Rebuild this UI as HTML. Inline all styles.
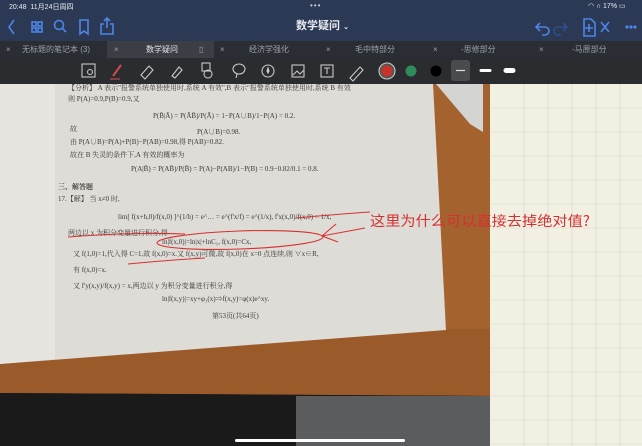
<!DOCTYPE html><html><head><meta charset="utf-8"><style>
*{margin:0;padding:0;box-sizing:border-box}
body{width:642px;height:446px;overflow:hidden;background:#2b3448;font-family:"Liberation Sans","Noto Sans CJK SC",sans-serif;position:relative}
.abs{position:absolute}
.top{left:0;top:0;width:642px;height:41px;background:#2c3954}
.tabs{left:0;top:41px;width:642px;height:17px;background:#2a2d33;color:#9aa0aa;font-size:8px}
.tool{left:0;top:58px;width:642px;height:26px;background:#2b2c2f}
.tab{position:absolute;top:0;height:17px;line-height:17px}
</style></head><body>
<div class="abs top">
<div class="abs" style="left:9px;top:2px;color:#e8ecf2;font-size:7px">20:48 &nbsp;11月24日周四</div>
<div class="abs" style="left:310px;top:1px;color:#c8cdd6;font-size:8px;letter-spacing:1px">•••</div>
<div class="abs" style="left:588px;top:2px;color:#e8ecf2;font-size:7px">◠ ∩ 17% ▭</div>
<svg class="abs" style="left:0;top:14px" width="642" height="27" fill="none" stroke="#4d86e8" stroke-width="1.6">
<path d="M14 6 L9 13 L14 20"/>
<rect x="32" y="8" width="4" height="4"/><rect x="38" y="8" width="4" height="4"/><rect x="32" y="14" width="4" height="4"/><rect x="38" y="14" width="4" height="4"/>
<circle cx="59" cy="11" r="4.5"/><path d="M62 14 L66 18"/>
<path d="M80 6 h8 v14 l-4 -3 l-4 3 z"/>
<path d="M104 10 h-3 v10 h12 v-10 h-3 M107 4 v10 M104 7 l3 -3 l3 3"/>
<path d="M540 9 l-4 4 l4 4 M536 13 h9 a4 4 0 0 1 0 8 h-3" />
<path d="M563 9 l4 4 l-4 4 M567 13 h-9 a4 4 0 0 0 0 8 h3" stroke="#2f4f8a"/>
<path d="M584 5 h7 l4 4 v13 h-11 z M589 10 v8 M585 14 h8"/>
<path d="M601 8 l8 10 M609 8 l-8 10"/>
<circle cx="627" cy="13" r="0.8"/><circle cx="631" cy="13" r="0.8"/><circle cx="635" cy="13" r="0.8"/>
</svg>
<div class="abs" style="left:296px;top:17px;color:#e8ecf2;font-size:11px;font-weight:bold">数学疑问 <span style="font-size:7px">⌄</span></div>
</div>
<div class="abs tabs">
<div class="tab" style="left:107px;width:107px;background:#3b3e45"></div>
<div class="tab" style="left:6px">×</div><div class="tab" style="left:22px">无标题的笔记本 (3)</div>
<div class="tab" style="left:114px">×</div><div class="tab" style="left:146px;color:#e6e8ec">数学疑问</div><div class="tab" style="left:199px">▯</div>
<div class="tab" style="left:220px">×</div><div class="tab" style="left:249px">经济学强化</div>
<div class="tab" style="left:326px">×</div><div class="tab" style="left:355px">毛中特部分</div>
<div class="tab" style="left:433px">×</div><div class="tab" style="left:461px">-思修部分</div>
<div class="tab" style="left:539px">×</div><div class="tab" style="left:572px">-马原部分</div>
</div>
<div class="abs tool">
<svg width="642" height="26" fill="none" stroke="#c9c9c9" stroke-width="1.1">
<rect x="82" y="6" width="13" height="13"/><circle cx="90" cy="14" r="2.5"/>
<path d="M113 18 l8 -11" stroke="#d24a4a" stroke-width="2"/><path d="M110 21 h10" stroke="#d24a4a"/>
<path d="M141 17 l8 -9 l4 4 l-8 9 z"/>
<path d="M172 18 l7 -9 l3 3 l-7 8 z"/>
<rect x="202" y="5" width="8" height="8"/><circle cx="208" cy="16" r="4"/>
<ellipse cx="239" cy="11" rx="6" ry="5"/><path d="M237 16 l-1 4"/>
<circle cx="268" cy="13" r="6"/><path d="M268 10 l1 3 l-1 2 l-1 -2z" fill="#c9c9c9"/>
<rect x="292" y="7" width="12" height="12"/><path d="M293 17 l4 -4 l3 3 l4 -4"/>
<rect x="321" y="7" width="12" height="12"/><path d="M324 10 h6 M327 10 v6"/>
<path d="M350 20 l10 -11 l3 3 l-10 11 z"/>
<circle cx="387" cy="13" r="8" fill="#555"/><circle cx="387" cy="13" r="5.5" fill="#c8322b" stroke="none"/>
<circle cx="411" cy="13" r="5.5" fill="#2f8a5c" stroke="none"/>
<circle cx="436" cy="13" r="5.5" fill="#000" stroke="none"/>
<rect x="451" y="2" width="19" height="21" rx="3" fill="#4a4b4f" stroke="none"/>
<path d="M456 12.5 h9" stroke="#ddd" stroke-width="1.2"/>
<path d="M481 12.5 h9" stroke="#fff" stroke-width="3" stroke-linecap="round"/>
<path d="M506 12.5 h7" stroke="#fff" stroke-width="5" stroke-linecap="round"/>
</svg></div>
<svg class="abs" style="left:0;top:84px" width="642" height="362">
<rect x="0" y="0" width="500" height="362" fill="#1a1a1c"/>
<polygon points="0,279 446,244 490,240 490,312 0,309" fill="#9b5a2a"/>
<polygon points="430,0 490,0 490,245 446,245" fill="#a4622e"/>
<polygon points="0,309 490,312 500,362 0,362" fill="#1b1a1b"/>
<polygon points="296,312 490,312 490,362 296,362" fill="#5a5c5e"/>
<polygon points="436,0 483,0 483,48 470,40" fill="#d4d4d2"/>
<polygon points="0,0 433,0 446,246 0,280" fill="#dedcd6"/>
<polygon points="0,0 55,0 55,275 0,280" fill="#e6e5e0"/>
<g fill="#3a3a3a" font-size="7" font-family="Liberation Serif,Noto Serif CJK SC,serif">
<text x="68" y="6">【分析】 A 表示"报警系统单独使用时,系统 A 有效",B 表示"报警系统单独使用时,系统 B 有效</text>
<text x="68" y="17">则 P(A)=0.9,P(B)=0.9,又</text>
<text x="153" y="34">P(B̄|Ā) = P(ĀB̄)/P(Ā) = 1−P(A∪B)/1−P(A) = 0.2.</text>
<text x="70" y="47">故</text><text x="197" y="50">P(A∪B)=0.98.</text>
<text x="70" y="60">由 P(A∪B)=P(A)+P(B)−P(AB)=0.98,得 P(AB)=0.82.</text>
<text x="70" y="73">故在 B 失灵的条件下,A 有效的概率为</text>
<text x="131" y="87">P(A|B̄) = P(AB̄)/P(B̄) = P(A)−P(AB)/1−P(B) = 0.9−0.82/0.1 = 0.8.</text>
<text x="58" y="105" font-weight="bold">三、解答题</text>
<text x="58" y="117">17.【解】 当 x≠0 时,</text>
<text x="118" y="135">lim[ f(x+h,0)/f(x,0) ]^(1/h) = e^… = e^(f'x/f) = e^(1/x), f'x(x,0)/f(x,0) = 1/x,</text>
<text x="68" y="151">两边以 x 为积分变量进行积分,得</text>
<text x="162" y="160">ln|f(x,0)|=ln|x|+lnC₁, f(x,0)=Cx,</text>
<text x="73" y="172">又 f(1,0)=1,代入得 C=1,故 f(x,0)=x.又 f(x,y)可微,故 f(x,0)在 x=0 点连续,则 ∀x∈R,</text>
<text x="73" y="188">有 f(x,0)=x.</text>
<text x="73" y="204">又 f'y(x,y)/f(x,y) = x,两边以 y 为积分变量进行积分,得</text>
<text x="162" y="217">ln|f(x,y)|=xy+φ₁(x)⇒f(x,y)=φ(x)e^xy.</text>
<text x="212" y="234">第53页(共64页)</text>
</g>
<rect x="490" y="0" width="152" height="362" fill="#f2f0e3"/>
<g stroke="#d8d8cc" stroke-width="0.6">
<path d="M524 0v362M548 0v362M572 0v362M596 0v362M620 0v362"/>
<path d="M490 24h152M490 48h152M490 72h152M490 96h152M490 120h152M490 144h152M490 168h152M490 192h152M490 216h152M490 240h152M490 264h152M490 288h152M490 312h152M490 336h152M490 360h152"/>
</g>
<g fill="none" stroke="#d83030" stroke-width="1.1">
<path d="M68 153 Q130 148 185 150"/>
<ellipse cx="240" cy="156" rx="83" ry="9" transform="rotate(-2 240 156)"/>
<path d="M128 180 Q170 176 205 174"/>
<path d="M296 134 Q340 130 370 128"/>
<path d="M322 152 L365 144 M322 152 L336 140 M322 152 L338 158"/>
</g>
<text x="370" y="142" fill="#d83030" font-size="14" font-family="Noto Sans CJK SC,sans-serif" textLength="220" lengthAdjust="spacingAndGlyphs">这里为什么可以直接去掉绝对值?</text>
<rect x="235" y="355" width="170" height="3" rx="1.5" fill="#fff"/>
</svg>
</body></html>
